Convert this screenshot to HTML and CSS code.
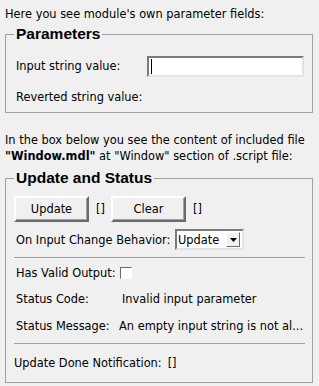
FILE: index.html
```html
<!DOCTYPE html>
<html lang = 'en-US'>
	<head>
		<meta charset = 'utf-8'>
		<title>module parameters</title>
		<link rel="stylesheet" href="styles.css">
	</head>
	<body>
		<p class = 'note note-top'>Here you see module's own parameter fields:</p>

		<fieldset class = 'group group-params'>
			<legend class = 'group-title'>Parameters</legend>
			<div class = 'row'>
				<span class = 'label label-input'>Input string value:</span>
				<span class = 'edit'><span class = 'caret'></span></span>
			</div>
			<div class = 'row row-second'>
				<span class = 'label'>Reverted string value:</span>
			</div>
		</fieldset>

		<p class = 'note note-file'>In the box below you see the content of included file<br><b>"Window.mdl"</b> at "Window" section of .script file:</p>

		<fieldset class = 'group group-status'>
			<legend class = 'group-title'>Update and Status</legend>
			<div class = 'row row-buttons'>
				<span class = 'button'>Update</span>
				<span class = 'brackets'>[]</span>
				<span class = 'button'>Clear</span>
				<span class = 'brackets'>[]</span>
			</div>
			<div class = 'row row-combo'>
				<span class = 'label label-combo'>On Input Change Behavior:</span>
				<span class = 'combo'>
					<span class = 'combo-text'>Update</span>
					<span class = 'combo-button'>
						<svg width = 7 height = 4><polygon points = '0,0 7,0 3.5,4'></polygon></svg>
					</span>
				</span>
			</div>
			<hr class = 'separator'>
			<div class = 'row row-valid'>
				<span class = 'label label-valid'>Has Valid Output:</span>
				<span class = 'check'></span>
			</div>
			<div class = 'row row-code'>
				<span class = 'label label-code'>Status Code:</span>
				<span class = 'value'>Invalid input parameter</span>
			</div>
			<div class = 'row row-message'>
				<span class = 'label label-message'>Status Message:</span>
				<span class = 'value'>An empty input string is not al...</span>
			</div>
			<hr class = 'separator separator-last'>
			<div class = 'row row-done'>
				<span class = 'label label-done'>Update Done Notification:</span>
				<span class = 'brackets'>[]</span>
			</div>
		</fieldset>
	</body>
</html>
```

FILE: styles.css
```css
body {
	margin: 0;
	background: #f0f0f0;
	color: #000000;
	font-family: 'DejaVu Sans', Tahoma, sans-serif;
	font-size: 11.4px;
	width: 319px;
	height: 386px;
	overflow: hidden;
}
.note {
	margin: 0;
	padding: 0 5px;
	line-height: 16px;
	white-space: nowrap;
}
.note-top {
	padding-top: 6px;
}
.note-file {
	margin-top: 19px;
}
.group {
	margin: 0 6px 0 5px;
	border: 1px solid #a0a0a0;
	padding: 12px 7px 4px 8px;
	min-width: 0;
}
.group-params {
	margin-top: 3px;
}
.group-status {
	margin-top: 5px;
	padding-top: 9px;
	padding-bottom: 8px;
}
.group-title {
	font-family: 'Liberation Sans', Arial, sans-serif;
	font-size: 15.5px;
	font-weight: bold;
	line-height: 18px;
	padding: 0 2px;
}
.row {
	display: flex;
	align-items: center;
	height: 22px;
}
.row-second {
	margin-top: 9px;
}
.label {
	box-sizing: border-box;
	padding-left: 2px;
	white-space: nowrap;
	flex-shrink: 0;
}
.label-input {
	width: 133px;
}
.edit {
	width: 151px;
	height: 17px;
	background: #ffffff;
	border-style: solid;
	border-width: 2px;
	border-color: #7a7a7a #e3e3e3 #e3e3e3 #7a7a7a;
	display: flex;
	align-items: center;
	padding-left: 2px;
}
.caret {
	width: 1px;
	height: 15px;
	background: #000000;
}

/* update and status */
.row-buttons {
	height: 26px;
}
.button {
	width: 71px;
	height: 22px;
	line-height: 22px;
	text-align: center;
	background: #f0f0f0;
	border-style: solid;
	border-width: 2px;
	border-color: #ffffff #6a6a6a #6a6a6a #ffffff;
	box-shadow: inset -1px -1px 0 #a0a0a0;
}
.brackets {
	padding-left: 7px;
	width: 15px;
}
.row-combo {
	margin-top: 7px;
	height: 21px;
}
.label-combo {
	width: 161px;
}
.combo {
	width: 65px;
	height: 17px;
	background: #ffffff;
	border-style: solid;
	border-width: 2px;
	border-color: #7a7a7a #e3e3e3 #e3e3e3 #7a7a7a;
	display: flex;
	align-items: center;
}
.combo-text {
	flex: 1;
	padding-left: 1px;
}
.combo-button {
	width: 12px;
	height: 13px;
	margin-right: 2px;
	background: #f0f0f0;
	border-style: solid;
	border-width: 1px;
	border-color: #ffffff #6a6a6a #6a6a6a #ffffff;
	display: flex;
	align-items: center;
	justify-content: center;
}
.combo-button polygon {
	fill: #000000;
}
.separator {
	margin: 7px 0 0 0;
	border: none;
	border-top: 1px solid #a0a0a0;
	height: 0;
}
.separator-last {
	margin-top: 6px;
}
.row-valid {
	margin-top: 4px;
}
.label-valid {
	width: 106px;
}
.check {
	width: 10px;
	height: 10px;
	background: #ffffff;
	border-style: solid;
	border-width: 1px;
	border-color: #6a6a6a #ffffff #ffffff #6a6a6a;
}
.row-code {
	margin-top: 4px;
}
.row-message {
	margin-top: 5px;
}
.label-code {
	width: 108px;
}
.label-message {
	width: 105px;
}
.value {
	white-space: nowrap;
}
.row-done {
	margin-top: 8px;
}
.label-done {
	padding-left: 0;
}
.row-done .brackets {
	padding-left: 6px;
}
```
